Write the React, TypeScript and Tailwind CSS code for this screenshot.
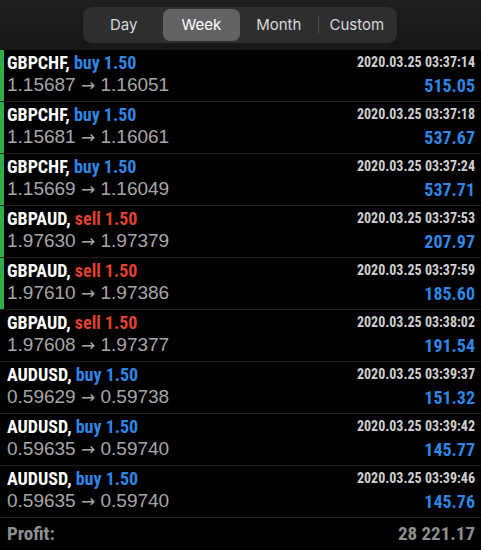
const deals = [
  { sym: "GBPCHF", side: "buy", time: "2020.03.25 03:37:14", from: "1.15687", to: "1.16051", profit: "515.05", mark: true },
  { sym: "GBPCHF", side: "buy", time: "2020.03.25 03:37:18", from: "1.15681", to: "1.16061", profit: "537.67", mark: true },
  { sym: "GBPCHF", side: "buy", time: "2020.03.25 03:37:24", from: "1.15669", to: "1.16049", profit: "537.71", mark: true },
  { sym: "GBPAUD", side: "sell", time: "2020.03.25 03:37:53", from: "1.97630", to: "1.97379", profit: "207.97", mark: true },
  { sym: "GBPAUD", side: "sell", time: "2020.03.25 03:37:59", from: "1.97610", to: "1.97386", profit: "185.60", mark: true },
  { sym: "GBPAUD", side: "sell", time: "2020.03.25 03:38:02", from: "1.97608", to: "1.97377", profit: "191.54", mark: false },
  { sym: "AUDUSD", side: "buy", time: "2020.03.25 03:39:37", from: "0.59629", to: "0.59738", profit: "151.32", mark: false },
  { sym: "AUDUSD", side: "buy", time: "2020.03.25 03:39:42", from: "0.59635", to: "0.59740", profit: "145.77", mark: false },
  { sym: "AUDUSD", side: "buy", time: "2020.03.25 03:39:46", from: "0.59635", to: "0.59740", profit: "145.76", mark: false },
]

const narrow = "font-['Roboto_Condensed','Liberation_Sans_Narrow',sans-serif]"

function Segments() {
  const tabs = ["Day", "Week", "Month", "Custom"]
  return (
    <div className="h-[50px] bg-gradient-to-b from-[#1e1e1f] to-[#171718] flex items-center justify-center">
      <div className="flex items-center h-[36px] w-[314px] rounded-[9px] bg-[#2e2e30] px-[2px] ml-[-1px] font-['Inter',sans-serif]">
        {tabs.map((t, i) => (
          <div key={t} className="flex items-center flex-1 h-full">
            {i === 3 && <div className="w-px h-[18px] bg-[#4a4a4c]" />}
            <div
              className={`flex-1 h-[32px] flex items-center justify-center rounded-[7px] text-[15px] ${
                t === "Week" ? "bg-[#636366] text-white" : "text-[#d8d8d8]"
              }`}
            >
              {t}
            </div>
          </div>
        ))}
      </div>
    </div>
  )
}

function DealRow({ d }: { d: (typeof deals)[number] }) {
  return (
    <div className="flex h-[52px] border-b border-[#1f1f21]">
      <div className={`w-[4px] ${d.mark ? "bg-[#2fae48]" : "bg-black"}`} />
      <div className="flex-1 pl-[3px] pr-[6px] pt-[1px]">
        <div className="flex items-center justify-between h-[22px]">
          <span className={`${narrow} font-bold text-[18px] text-white`}>
            {d.sym},{" "}
            <span className={d.side === "buy" ? "text-[#2f86e6]" : "text-[#e0402f]"}>{d.side} 1.50</span>
          </span>
          <span className={`${narrow} font-bold text-[14px] text-[#cfcfcf]`}>{d.time}</span>
        </div>
        <div className="flex items-center justify-between h-[24px]">
          <span className="font-['Liberation_Sans',sans-serif] text-[19px] text-[#a6a6a6]">
            {d.from} <span className="font-['DejaVu_Sans',sans-serif] text-[17px]">→</span> {d.to}
          </span>
          <span className={`${narrow} font-bold text-[18px] text-[#2f86e6]`}>{d.profit}</span>
        </div>
      </div>
    </div>
  )
}

export default function App() {
  return (
    <div className="w-[481px] h-[550px] bg-black overflow-hidden">
      <Segments />
      {deals.map((d) => (
        <DealRow key={d.time} d={d} />
      ))}
      <div className={`flex items-center justify-between h-[32px] pl-[7px] pr-[6px] ${narrow} font-bold text-[19px] text-[#8f8f8f]`}>
        <span>Profit:</span>
        <span>28 221.17</span>
      </div>
    </div>
  )
}
